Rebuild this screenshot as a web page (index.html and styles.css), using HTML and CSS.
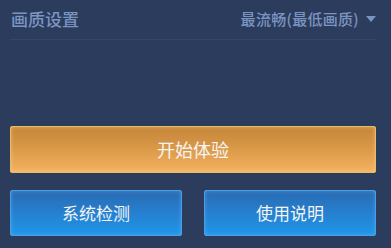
FILE: index.html
```html
<!DOCTYPE html>
<html>
<head>
<meta charset="utf-8">
<link rel="stylesheet" href="styles.css">
</head>
<body>
<div class="page">
  <div class="header">
    <span class="title">画质设置</span>
    <span class="select">最流畅(最低画质)<span class="caret"></span></span>
  </div>
  <div class="spacer"></div>
  <button class="btn btn-orange">开始体验</button>
  <div class="row">
    <button class="btn btn-blue">系统检测</button>
    <button class="btn btn-blue">使用说明</button>
  </div>
</div>
</body>
</html>
```
FILE: styles.css
```css
html, body {
  margin: 0;
  padding: 0;
  background: #2c3c5d;
  width: 391px;
  height: 248px;
  overflow: hidden;
}
.page {
  padding: 0 15px 0 10px;
  display: flex;
  flex-direction: column;
  font-family: "Noto Sans CJK SC", "Noto Sans", sans-serif;
}
.header {
  height: 40px;
  border-bottom: 1px solid #34466a;
  display: flex;
  align-items: center;
  justify-content: space-between;
  box-sizing: border-box;
  padding-bottom: 2px;
}
.title {
  font-size: 17px;
  font-weight: 500;
  color: #7b94c1;
  padding-left: 1px;
}
.select {
  font-size: 15px;
  font-weight: 500;
  color: #7b94c1;
  display: flex;
  align-items: center;
  letter-spacing: 0.3px;
}
.caret {
  width: 0;
  height: 0;
  border-left: 5px solid transparent;
  border-right: 5px solid transparent;
  border-top: 6px solid #7b94c1;
  margin-left: 7px;
  margin-top: 1px;
}
.spacer {
  height: 86px;
}
.btn {
  border: none;
  margin: 0;
  font-family: "Noto Sans CJK SC", "Noto Sans", sans-serif;
  font-size: 17px;
  font-weight: 400;
  color: #f4f4f4;
  border-radius: 3px;
  display: flex;
  align-items: center;
  justify-content: center;
  padding: 0 0 2px 0;
}
.btn-orange {
  height: 47px;
  width: 366px;
  font-size: 18px;
  background: linear-gradient(to bottom, #c4843a 0%, #d99846 45%, #f5b363 100%);
  box-shadow: inset 0 0 0 1px #e6bc6c, inset 0 0 4px 1px rgba(255, 215, 130, 0.5);
}
.row {
  display: flex;
  justify-content: space-between;
  margin-top: 17px;
}
.btn-blue {
  height: 46px;
  width: 172px;
  background: linear-gradient(to bottom, #2a6ab1 0%, #2580d0 50%, #1f97ea 100%);
  box-shadow: inset 0 0 0 1px #4a9ee6, inset 0 0 4px 1px rgba(120, 190, 255, 0.4);
}
```
